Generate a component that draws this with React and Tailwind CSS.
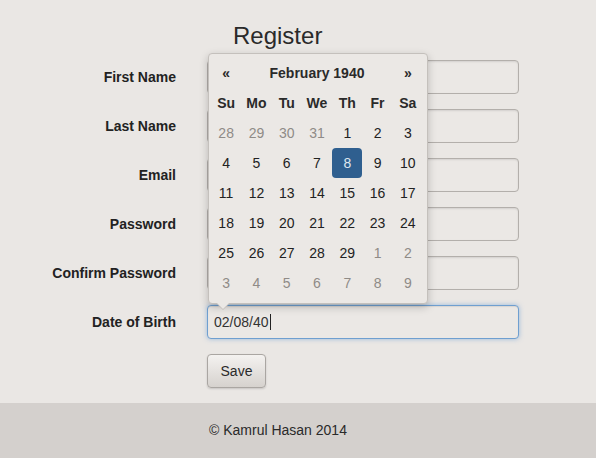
import React from 'react';

const FIELDS = ['First Name', 'Last Name', 'Email', 'Password', 'Confirm Password'];

const WEEKS = [
    [[28, 1], [29, 1], [30, 1], [31, 1], [1], [2], [3]],
    [[4], [5], [6], [7], [8, 0, 1], [9], [10]],
    [[11], [12], [13], [14], [15], [16], [17]],
    [[18], [19], [20], [21], [22], [23], [24]],
    [[25], [26], [27], [28], [29], [1, 1], [2, 1]],
    [[3, 1], [4, 1], [5, 1], [6, 1], [7, 1], [8, 1], [9, 1]],
];

const DAYS = ['Su', 'Mo', 'Tu', 'We', 'Th', 'Fr', 'Sa'];

const DatePicker = () => (
    <div className="absolute left-[208px] top-[53px] w-[220px] rounded-[4px] border border-[#c4c0bc] bg-[#ebe8e5] pl-[2px] pr-[4px] pt-[4px] pb-[5px] shadow-[0_3px_8px_rgba(0,0,0,0.22)] z-10">
        {/* header */}
        <div className="grid grid-cols-7 text-[14px] font-bold text-[#2a2a2a]">
            <div className="flex h-[30px] items-center justify-center">«</div>
            <div className="col-span-5 flex h-[30px] items-center justify-center">February 1940</div>
            <div className="flex h-[30px] items-center justify-center">»</div>
        </div>
        <div className="grid grid-cols-7 text-[14px] font-bold text-[#2a2a2a]">
            {DAYS.map((d) => (
                <div key={d} className="flex h-[30px] items-center justify-center">{d}</div>
            ))}
        </div>
        {WEEKS.map((week, i) => (
            <div key={i} className="grid grid-cols-7 text-[14px]">
                {week.map(([n, old, active], j) => (
                    <div
                        key={j}
                        className={`flex h-[30px] items-center justify-center rounded-[4px] ${
                            active
                                ? 'bg-[#2f5f8f] text-[#dfe7ef]'
                                : old
                                ? 'text-[#8f8b87]'
                                : 'text-[#222]'
                        }`}
                    >
                        {n}
                    </div>
                ))}
            </div>
        ))}
        {/* little pointer */}
        <div className="absolute left-[7px] -bottom-[7px] h-0 w-0 border-x-[7px] border-t-[7px] border-x-transparent border-t-[#c4c0bc]"></div>
        <div className="absolute left-[8px] -bottom-[6px] h-0 w-0 border-x-[6px] border-t-[6px] border-x-transparent border-t-[#ebe8e5]"></div>
    </div>
);

export default function App() {
    return (
        <div className="min-h-[458px] bg-[#eae7e4] font-['Liberation_Sans',Arial,sans-serif] text-[#333]">
            <div className="relative pt-[22px] pb-[15px]">
                <h1 className="ml-[233px] text-[24px] leading-[28px] text-[#2a2a2a]">Register</h1>

                <div className="mt-[10px] flex flex-col gap-[15px]">
                    {FIELDS.map((f) => (
                        <div key={f} className="flex h-[34px] items-center">
                            <label className="w-[176px] text-right text-[14px] font-bold text-[#222]">{f}</label>
                            <div className="ml-[31px] h-[34px] w-[312px] rounded-[4px] border border-[#b3afab] bg-[#ebe8e5] shadow-[inset_0_1px_2px_rgba(0,0,0,0.1)]"></div>
                        </div>
                    ))}
                    <div className="flex h-[34px] items-center">
                        <label className="w-[176px] text-right text-[14px] font-bold text-[#222]">Date of Birth</label>
                        <div className="ml-[31px] flex h-[34px] w-[312px] items-center rounded-[4px] border border-[#6f9fd0] bg-[#ebe8e5] px-[6px] text-[14px] text-[#333] shadow-[inset_0_1px_1px_rgba(0,0,0,0.08),0_0_5px_rgba(102,155,215,0.6)]">
                            02/08/40<span className="ml-[1px] inline-block h-[16px] w-px bg-[#222]"></span>
                        </div>
                    </div>
                    <div className="flex">
                        <button className="ml-[207px] h-[34px] w-[59px] rounded-[4px] border border-[#aaa6a2] bg-gradient-to-b from-[#f4f2f0] to-[#d6d2ce] text-[14px] text-[#2a2a2a] shadow-[0_1px_2px_rgba(0,0,0,0.15)]">
                            Save
                        </button>
                    </div>
                </div>

                <DatePicker />
            </div>

            <footer className="flex h-[55px] items-center bg-[#d4d0cd] pl-[209px] text-[14px] text-[#2a2a2a]">
                © Kamrul Hasan 2014
            </footer>
        </div>
    );
}
